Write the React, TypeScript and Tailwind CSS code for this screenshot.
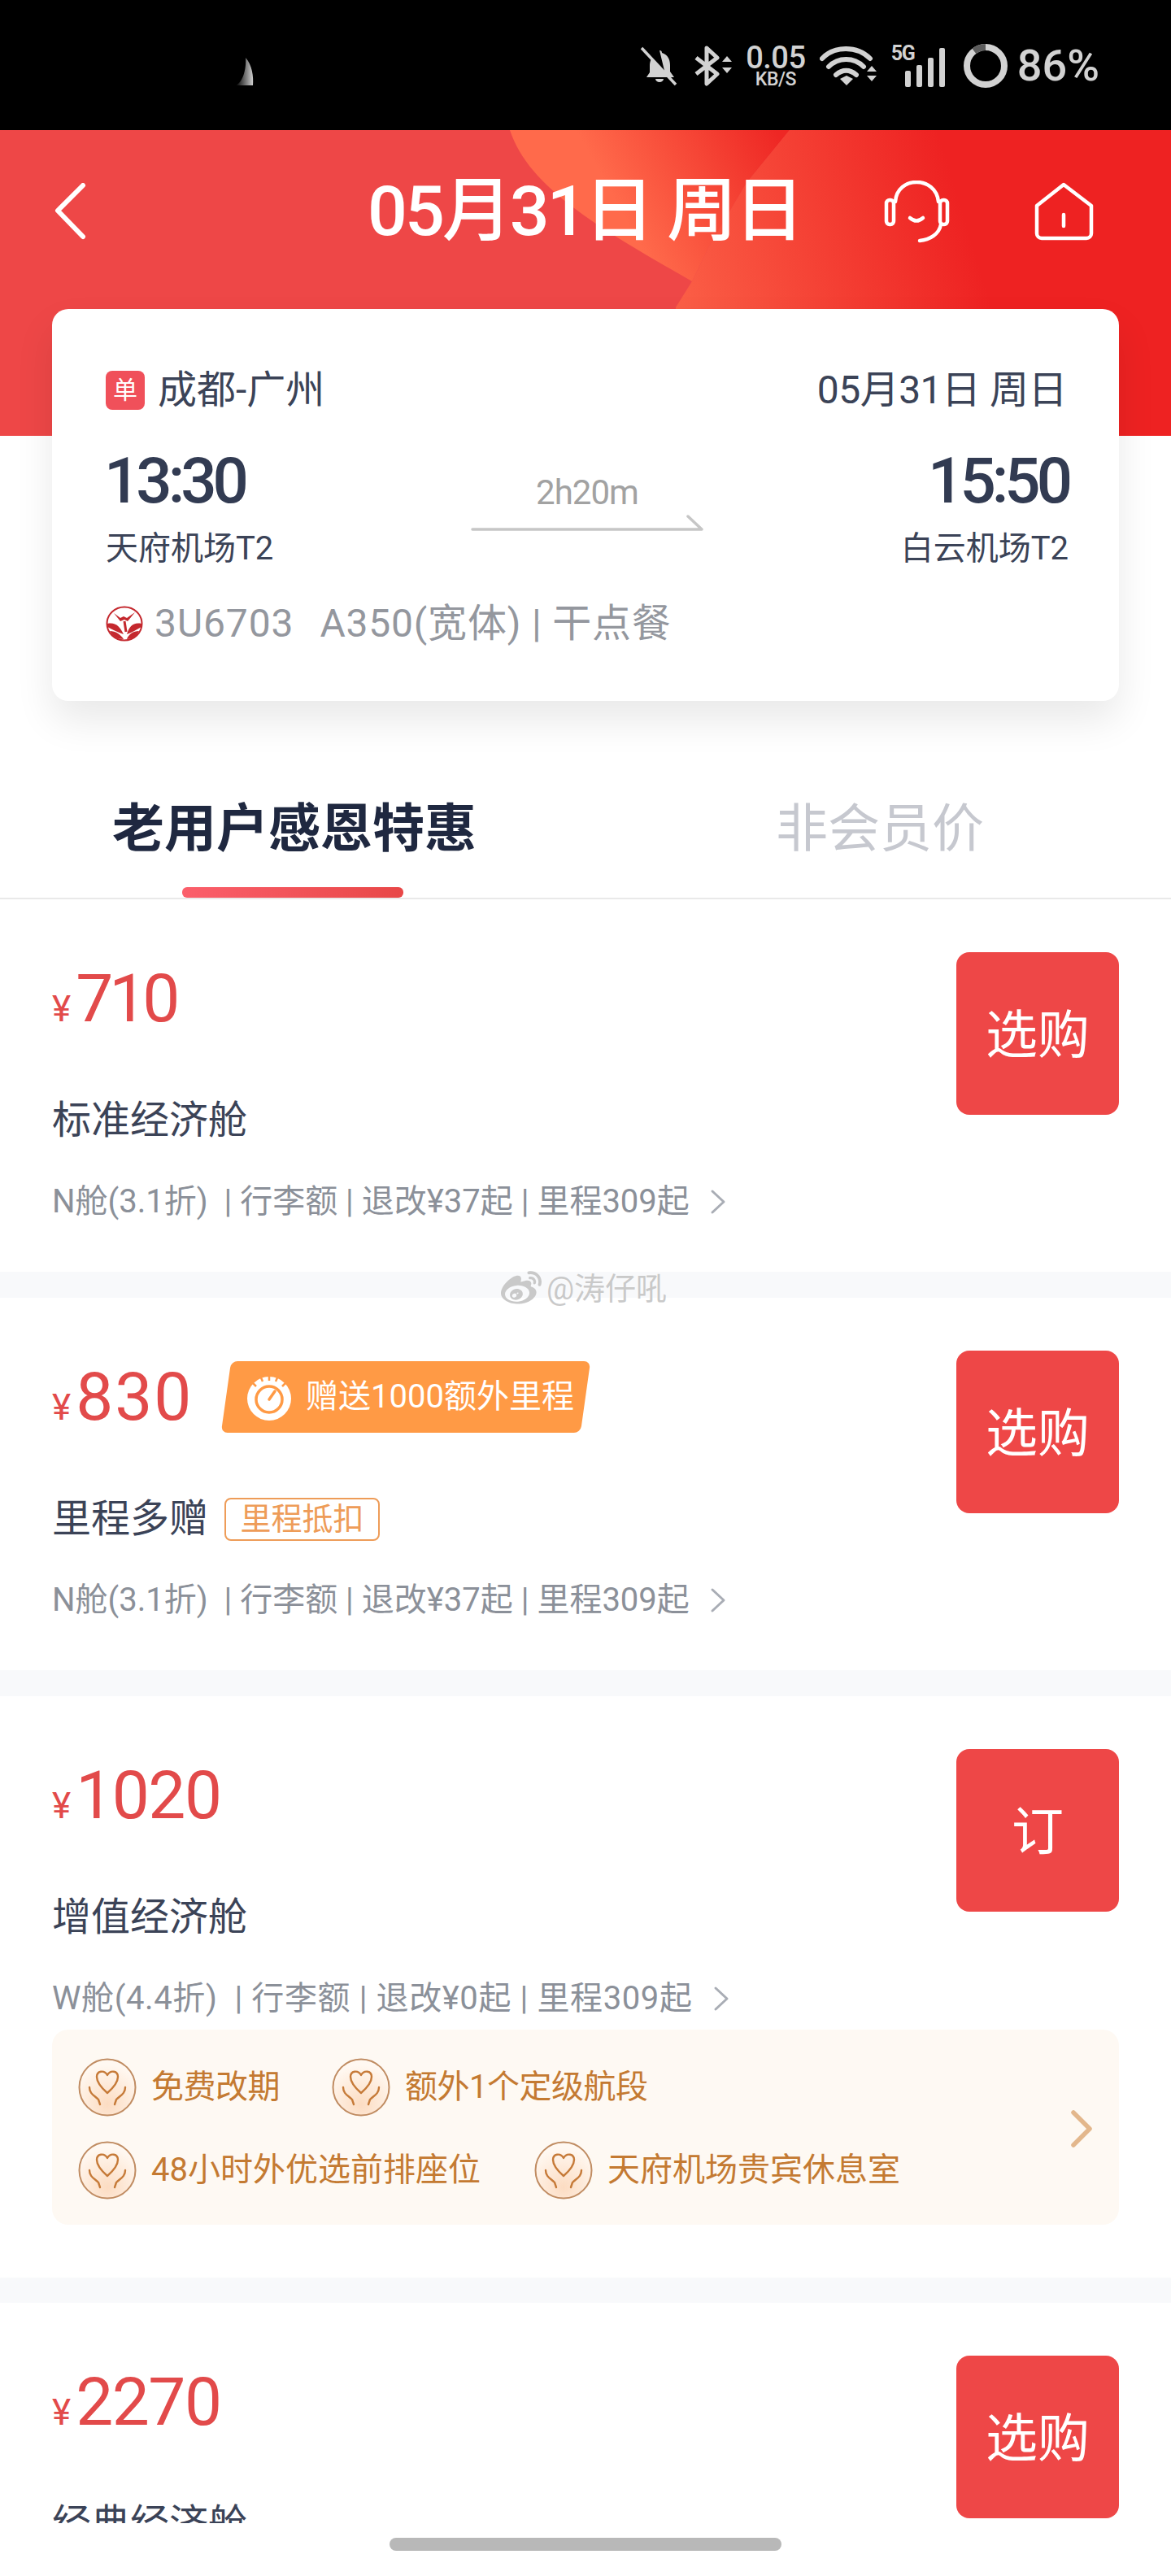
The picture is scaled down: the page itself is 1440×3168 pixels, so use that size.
import React from "react";
import { FaWeibo } from "react-icons/fa";

const font = "font-['Roboto','Noto_Sans_CJK_SC',sans-serif]";

function StatusBar() {
  return (
    <div className="relative flex h-[160px] shrink-0 items-center justify-end bg-black pr-[88px] pt-[2px] text-[#d2d2d2]">
      <svg width="30" height="40" viewBox="0 0 30 40" className="absolute left-[284px] top-[68px]">
        <defs>
          <linearGradient id="blob" x1="0" y1="0" x2="1" y2="0">
            <stop offset="0" stopColor="#000" />
            <stop offset="1" stopColor="#cfcfcf" />
          </linearGradient>
        </defs>
        <path d="M6 37 C16 32 19 14 18 3 C26 12 28 26 27 37 Z" fill="url(#blob)" />
      </svg>
      <svg width="50" height="50" viewBox="0 0 50 50" fill="#d2d2d2">
        <path d="M25 6 c2 0 3 1 3 3 c7 2 10 8 10 15 v8 l5 7 H9 l4 -6 v-9 c0 -3 1 -6 2 -8 L32 35 Z" />
        <path d="M20 41 h10 a5 4 0 0 1 -10 0Z" />
        <path d="M3 3 L45 48" stroke="#d2d2d2" strokeWidth="3.5" />
      </svg>
      <svg width="50" height="50" viewBox="0 0 50 50" fill="none" className="ml-[16px]">
        <path d="M4 15 L30 35 L17 47 V3 L30 15 L4 35" stroke="#d2d2d2" strokeWidth="5" strokeLinejoin="round" />
        <path d="M36 20 l6 -7 l6 7Z M36 27 h12 l-6 7Z" fill="#d2d2d2" />
      </svg>
      <div className="ml-[12px] flex w-[80px] flex-col items-center">
        <span className="text-[38px] font-medium leading-[34px] tracking-[-0.5px]">0.05</span>
        <span className="text-[23px] font-medium leading-[20px] tracking-[-0.5px]">KB/S</span>
      </div>
      <svg width="70" height="52" viewBox="0 0 70 52" fill="none" className="ml-[14px]">
        <path d="M3 17 C18 1 46 1 62 17" stroke="#d2d2d2" strokeWidth="6" strokeLinecap="round" />
        <path d="M11 27 C23 15 42 15 54 27" stroke="#d2d2d2" strokeWidth="6" strokeLinecap="round" />
        <path d="M20 37 C28 30 37 30 45 37" stroke="#d2d2d2" strokeWidth="6" strokeLinecap="round" />
        <path d="M25 42 L33 38 L41 42 L33 50Z" fill="#d2d2d2" />
        <path d="M58 33 l6 -7 l6 7Z M58 38 h12 l-6 7Z" fill="#d2d2d2" />
      </svg>
      <div className="relative ml-[18px] h-[52px] w-[66px]">
        <span className="absolute left-0 top-[-2px] text-[25px] font-bold leading-[26px] tracking-[-1.5px]">5G</span>
        <div className="absolute bottom-0 right-0 flex items-end gap-[7px]">
          <div className="h-[20px] w-[7px] rounded-[2px] bg-[#d2d2d2]" />
          <div className="h-[27px] w-[7px] rounded-[2px] bg-[#d2d2d2]" />
          <div className="h-[36px] w-[7px] rounded-[2px] bg-[#d2d2d2]" />
          <div className="h-[48px] w-[7px] rounded-[2px] bg-[#d2d2d2]" />
        </div>
      </div>
      <svg width="56" height="56" viewBox="0 0 56 56" fill="none" className="ml-[22px]">
        <circle cx="28" cy="28" r="23" stroke="#d2d2d2" strokeWidth="8" />
        <path d="M14 10 A23 23 0 0 1 28 5" stroke="#5c5c5c" strokeWidth="8" />
      </svg>
      <span className="ml-[11px] text-[54px] font-medium leading-none">86%</span>
    </div>
  );
}

function Header() {
  return (
    <div className="relative h-[376px] shrink-0 overflow-hidden bg-[#ee4747]">
      <svg width="1440" height="376" viewBox="0 0 1440 376" className="absolute left-0 top-0">
        <defs>
          <linearGradient id="g1" x1="730" y1="150" x2="965" y2="20" gradientUnits="userSpaceOnUse">
            <stop offset="0.2" stopColor="#ff6a4b" />
            <stop offset="1" stopColor="#ee2724" />
          </linearGradient>
          <linearGradient id="g2" x1="830" y1="230" x2="1190" y2="120" gradientUnits="userSpaceOnUse">
            <stop offset="0" stopColor="#fb6047" />
            <stop offset="1" stopColor="#ee2222" />
          </linearGradient>
        </defs>
        <path d="M627 0 C650 70 735 120 851 186 L872 143 L918 65 L971 0Z" fill="url(#g1)" />
        <path d="M971 0 L918 65 L872 143 L851 186 L831 218 L826 376 H1440 V0Z" fill="url(#g2)" />
      </svg>
      <div className="relative flex h-[200px] items-center text-white">
        <svg width="40" height="70" viewBox="0 0 40 70" fill="none" className="ml-[66px]">
          <path d="M36 3 L5 34 L36 66" stroke="#fff" strokeWidth="6" strokeLinecap="round" strokeLinejoin="round" />
        </svg>
        <span className="ml-[346px] w-[523px] whitespace-nowrap text-center text-[86px] font-medium leading-[100px] tracking-[-3px]">05月31日 周日</span>
        <svg width="81" height="77" viewBox="0 0 81 77" fill="none" className="ml-[112px]" stroke="#fff" strokeWidth="4.5" strokeLinecap="round">
          <path d="M14 26 C16 -6 64 -6 67 26" />
          <rect x="3" y="24" width="9" height="30" rx="4" />
          <rect x="69" y="24" width="9" height="30" rx="4" />
          <path d="M70 54 C68 66 56 73 44 74" />
          <path d="M32 46 Q40 53 48 46" />
        </svg>
        <svg width="73" height="72" viewBox="0 0 73 72" fill="none" className="ml-[104px]" stroke="#fff" strokeWidth="4.5" strokeLinecap="round" strokeLinejoin="round">
          <path d="M36 3 L70 29 V63 a6 6 0 0 1 -6 6 H9 a6 6 0 0 1 -6 -6 V29 Z" />
          <path d="M36 40 V54" />
        </svg>
      </div>
    </div>
  );
}

function AirlineLogo() {
  return (
    <svg width="46" height="44" viewBox="0 0 46 44" fill="none">
      <ellipse cx="23" cy="22" rx="21.5" ry="20.5" fill="#fff" stroke="#c4282e" strokeWidth="2" />
      <path d="M10 9 L18 15 L22 13 L26 15 L36 8 L27 19 L23 17 L18 19Z" fill="#c4282e" />
      <path d="M2 22 C12 20 17 25 22 35 C16 33 8 29 2 26Z" fill="#c4282e" />
      <path d="M44 22 C34 20 29 25 26 35 C32 33 38 29 44 26Z" fill="#c4282e" />
      <path d="M5 31 C12 31 18 35 22 41 C14 41 8 38 5 31Z" fill="#c4282e" />
      <path d="M41 31 C34 31 28 35 26 41 C32 41 38 38 41 31Z" fill="#c4282e" />
      <path d="M23 19 L25 32" stroke="#c4282e" strokeWidth="3" />
    </svg>
  );
}

function FlightCard() {
  return (
    <div className="relative z-10 ml-[64px] mr-[64px] -mt-[156px] h-[482px] shrink-0 rounded-[20px] bg-white pl-[66px] pr-[62px] pt-[74px] shadow-[0_24px_48px_rgba(0,0,0,0.09)]">
      <div className="flex h-[52px] items-center justify-between text-[48px] leading-[52px] text-[#3b4357]">
        <div className="flex items-center">
          <span className="flex h-[48px] w-[48px] items-center justify-center rounded-[8px] bg-[#f0505a] text-[30px] leading-none text-white">单</span>
          <span className="ml-[16px]">成都-广州</span>
        </div>
        <span className="mr-[2px] tracking-[-0.5px]">05月31日 周日</span>
      </div>
      <div className="mt-[44px] flex h-[150px] justify-between">
        <div className="w-[300px]">
          <div className="-ml-[2px] text-[78px] font-medium leading-[84px] tracking-[-5px] text-[#323b52]">13:30</div>
          <div className="mt-[17px] text-[40px] leading-[48px] text-[#3b4357]">天府机场T2</div>
        </div>
        <div className="relative flex w-[290px] flex-col items-center">
          <span className="mt-[32px] text-[42px] leading-[48px] tracking-[-1px] text-[#a2a2a2]">2h20m</span>
          <svg width="286" height="20" viewBox="0 0 286 20" fill="none" className="mt-[3px]">
            <path d="M2 18 H284 L267 2" stroke="#c6c6c6" strokeWidth="3.5" strokeLinecap="round" strokeLinejoin="round" />
          </svg>
        </div>
        <div className="flex w-[300px] flex-col items-end">
          <div className="text-[78px] font-medium leading-[84px] tracking-[-5px] text-[#323b52]">15:50</div>
          <div className="mt-[17px] text-[40px] leading-[48px] text-[#3b4357]">白云机场T2</div>
        </div>
      </div>
      <div className="mt-[42px] flex h-[50px] items-center text-[48px] leading-[50px] text-[#94979e]">
        <AirlineLogo />
        <span className="ml-[14px] tracking-[0.9px]">3U6703</span>
        <span className="ml-[32px] tracking-[0.8px]">A350(宽体) | 干点餐</span>
      </div>
    </div>
  );
}

function Tabs() {
  return (
    <div className="relative mt-[118px] flex h-[126px] shrink-0 border-b-2 border-[#e9e9e9]">
      <div className="ml-[138px] text-[64px] font-bold leading-[80px] text-[#1f2840]">老用户感恩特惠</div>
      <div className="ml-[368px] text-[64px] leading-[80px] text-[#c6c8cf]">非会员价</div>
      <div className="absolute bottom-0 left-[224px] h-[13px] w-[272px] rounded-[6px] bg-gradient-to-r from-[#fb5f6b] to-[#e84747]" />
    </div>
  );
}

function Chevron({ className }: { className?: string }) {
  return (
    <svg width="22" height="32" viewBox="0 0 22 32" fill="none" className={className}>
      <path d="M4 3 L18 16 L4 29" stroke="#a9adb5" strokeWidth="3" strokeLinecap="round" strokeLinejoin="round" />
    </svg>
  );
}

function Fare(props: {
  price: string;
  priceClass?: string;
  title: string;
  detail: string;
  detailClass?: string;
  action?: string;
  extra?: React.ReactNode;
  tag?: string;
  children?: React.ReactNode;
  pb?: string;
}) {
  return (
    <div className={`shrink-0 bg-white px-[64px] pt-[64px] ${props.pb ?? "pb-[46px]"}`}>
      <div className="flex justify-between">
        <div className="min-w-0 flex-1">
          <div className="flex h-[116px] items-center">
            <div className="flex items-baseline text-[#e24a4a]">
              <span className="text-[44px] leading-none">¥</span>
              <span className={`ml-[6px] text-[82px] leading-none ${props.priceClass ?? "tracking-[-1.5px]"}`}>{props.price}</span>
            </div>
            {props.extra}
          </div>
          <div className="mt-[52px] flex h-[80px] items-center">
            <span className="text-[48px] leading-[60px] text-[#3b4357]">{props.title}</span>
            {props.tag && (
              <span className="ml-[20px] flex h-[53px] w-[191px] items-center justify-center rounded-[8px] border-2 border-[#ee9c58] text-[38px] leading-none text-[#ee9c58]">
                {props.tag}
              </span>
            )}
          </div>
          <div className="mt-[20px] flex h-[80px] items-center">
            <span className={`whitespace-pre text-[40px] leading-[50px] text-[#8b9099] ${props.detailClass ?? ""}`}>{props.detail}</span>
            <Chevron className="ml-[24px]" />
          </div>
        </div>
        <button className="mt-px flex h-[200px] w-[200px] shrink-0 items-center justify-center rounded-[16px] bg-[#ee4747] pt-[6px] text-[64px] leading-none text-white">
          {props.action ?? "选购"}
        </button>
      </div>
      {props.children}
    </div>
  );
}

function BonusBadge() {
  return (
    <div className="ml-[41px] flex h-[88px] w-[442px] -skew-x-[8deg] items-center rounded-[8px] bg-[#ff9a45]">
      <div className="flex skew-x-[8deg] items-center pl-[24px]">
        <svg width="58" height="58" viewBox="0 0 58 58" fill="none">
          <circle cx="29" cy="31" r="27" fill="#fff" />
          <circle cx="29" cy="32" r="16" fill="none" stroke="#ff9a45" strokeWidth="3.5" />
          <path d="M29 32 L36 22" stroke="#ff9a45" strokeWidth="3.5" strokeLinecap="round" />
          <path d="M7 10 l6 6 M18 3 l3 7 M29 1 v8 M40 3 l-3 7 M51 10 l-6 6" stroke="#ff9a45" strokeWidth="2.5" />
        </svg>
        <span className="ml-[16px] whitespace-nowrap text-[40px] leading-none text-white">赠送1000额外里程</span>
      </div>
    </div>
  );
}

function Care() {
  return (
    <svg width="72" height="72" viewBox="0 0 72 72" fill="none" className="shrink-0">
      <defs>
        <radialGradient id="care" cx="0.5" cy="0.8" r="0.7">
          <stop offset="0" stopColor="#fcdcc2" />
          <stop offset="1" stopColor="#fff8f1" />
        </radialGradient>
      </defs>
      <circle cx="36" cy="36" r="34.5" fill="url(#care)" stroke="#c08c62" strokeWidth="2" />
      <path d="M36 43 C28 36 23 30 23 23 C23 16 32 14 36 21 C40 14 49 16 49 23 C49 30 44 36 36 43Z" stroke="#c67a38" strokeWidth="2.4" strokeLinejoin="round" />
      <path d="M14 36 C14 44 20 46 25 51 L27 57" stroke="#c67a38" strokeWidth="2.4" strokeLinecap="round" />
      <path d="M58 36 C58 44 52 46 47 51 L45 57" stroke="#c67a38" strokeWidth="2.4" strokeLinecap="round" />
    </svg>
  );
}

function Perk({ text, className, textClass }: { text: string; className?: string; textClass?: string }) {
  return (
    <div className={`flex items-center ${className ?? ""}`}>
      <Care />
      <span className={`ml-[18px] whitespace-nowrap text-[40px] leading-none text-[#c47a32] ${textClass ?? ""}`}>{text}</span>
    </div>
  );
}

function Perks() {
  return (
    <div className="relative -mt-[2px] flex h-[240px] flex-col justify-center gap-[30px] rounded-[20px] bg-[#fef9f3] pl-[32px] pt-[4px]">
      <div className="flex">
        <Perk text="免费改期" textClass="tracking-[-0.5px]" />
        <Perk text="额外1个定级航段" className="ml-[64px]" textClass="tracking-[-0.5px]" />
      </div>
      <div className="flex">
        <Perk text="48小时外优选前排座位" />
        <Perk text="天府机场贵宾休息室" className="ml-[66px]" />
      </div>
      <svg width="28" height="48" viewBox="0 0 28 48" fill="none" className="absolute right-[32px] top-[98px]">
        <path d="M4 4 L24 24 L4 44" stroke="#e3b78c" strokeWidth="5.5" strokeLinecap="round" strokeLinejoin="round" />
      </svg>
    </div>
  );
}

function Watermark() {
  return (
    <div className="absolute left-[616px] top-[1560px] z-20 flex items-center text-[#c9c9c9] [text-shadow:0_0_2px_rgba(255,255,255,0.9)]">
      <FaWeibo size={50} />
      <span className="ml-[6px] text-[38px] leading-none">@涛仔吼</span>
    </div>
  );
}

export default function App() {
  const d1 = "N舱(3.1折)  | 行李额 | 退改¥37起 | 里程309起";
  return (
    <div className={`relative flex h-[3168px] w-[1440px] flex-col overflow-hidden bg-white ${font}`}>
      <StatusBar />
      <Header />
      <FlightCard />
      <Tabs />
      <div className="flex min-h-0 flex-1 flex-col overflow-hidden">
        <Fare price="710" priceClass="tracking-[-5px]" title="标准经济舱" detail={d1} />
        <div className="h-[32px] shrink-0 bg-[#f8f9fb]" />
        <Fare price="830" priceClass="tracking-[2px]" title="里程多赠" detail={d1} tag="里程抵扣" extra={<BonusBadge />} />
        <div className="h-[32px] shrink-0 bg-[#f8f9fb]" />
        <Fare price="1020" title="增值经济舱" detail="W舱(4.4折)  | 行李额 | 退改¥0起 | 里程309起" detailClass="tracking-[0.6px]" action="订" pb="pb-[65px]">
          <Perks />
        </Fare>
        <div className="h-[31px] shrink-0 bg-[#f8f9fb]" />
        <Fare price="2270" title="经典经济舱" detail={d1} />
      </div>
      <div className="flex h-[65px] shrink-0 justify-center bg-white pt-[18px]">
        <div className="h-[16px] w-[482px] rounded-full bg-[#b8b8b8]" />
      </div>
      <Watermark />
    </div>
  );
}
